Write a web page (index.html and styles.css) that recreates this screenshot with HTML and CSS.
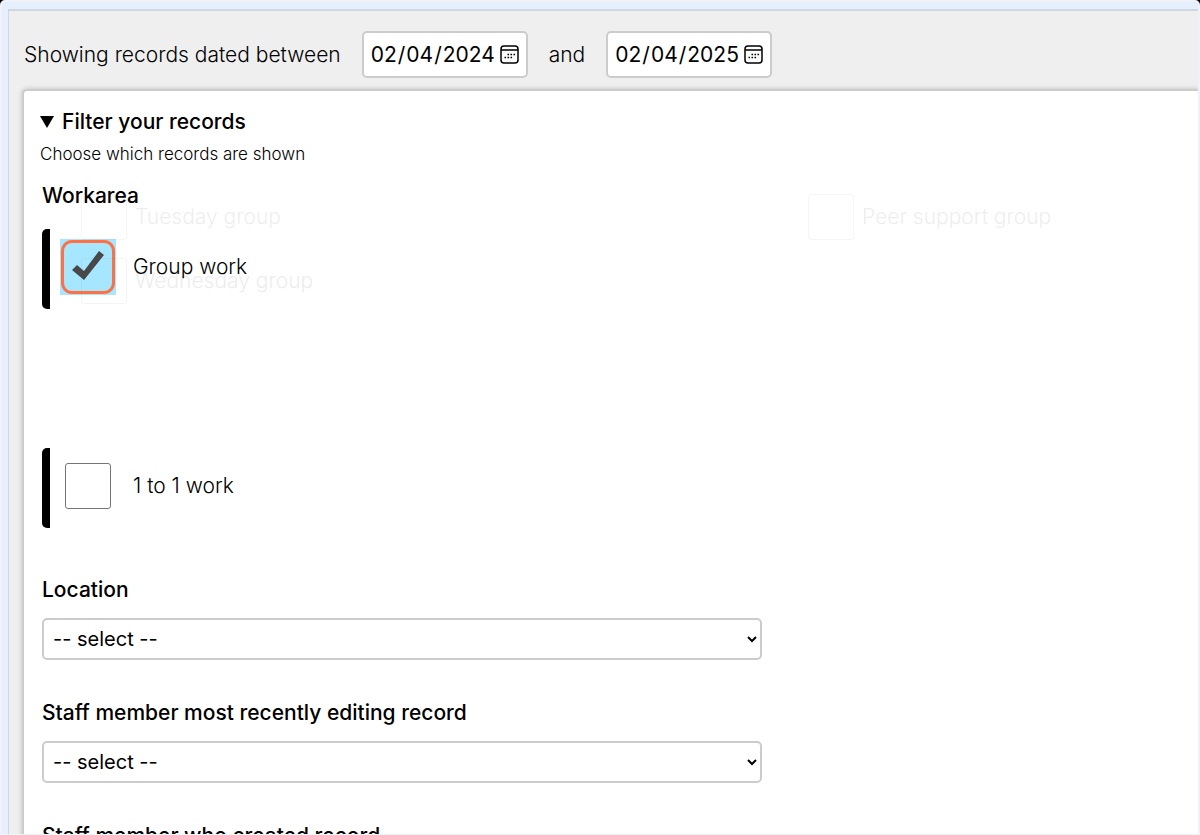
FILE: index.html
```html
<!DOCTYPE html>
<html lang="en">
<head>
<meta charset="utf-8">
<title>Filter your records</title>
<link rel="stylesheet" href="styles.css">
</head>
<body>
<div class="frame">
  <main class="panel">
    <form class="dates">
      <label for="from">Showing records dated between</label>
      <input class="date" id="from" type="date" value="2024-02-04">
      <label for="to">and</label>
      <input class="date" id="to" type="date" value="2025-02-04">
    </form>
    <section class="card">
      <details open>
        <summary class="summary">
          <svg class="marker" viewBox="0 0 14 12" aria-hidden="true"><path d="M0 0h14L7 12z"/></svg>
          Filter your records
        </summary>
        <p class="hint">Choose which records are shown</p>
        <div class="filters">
          <fieldset class="workarea">
            <legend class="heading">Workarea</legend>
            <div class="option">
              <span class="tick-cell focused"><input class="tick" id="group" type="checkbox" checked></span>
              <label for="group">Group work</label>
            </div>
            <div class="option">
              <span class="tick-cell"><input class="tick" id="single" type="checkbox"></span>
              <label for="single">1 to 1 work</label>
            </div>
            <div class="fading">
              <div class="sub"><input class="tick" id="tue" type="checkbox"><label for="tue">Tuesday group</label></div>
              <div class="sub"><input class="tick" id="peer" type="checkbox"><label for="peer">Peer support group</label></div>
              <div class="sub"><input class="tick" id="wed" type="checkbox"><label for="wed">Wednesday group</label></div>
            </div>
          </fieldset>
          <div class="field">
            <label class="heading" for="location">Location</label>
            <select class="select" id="location"><option>-- select --</option></select>
          </div>
          <div class="field">
            <label class="heading" for="editor">Staff member most recently editing record</label>
            <select class="select" id="editor"><option>-- select --</option></select>
          </div>
          <div class="field">
            <label class="heading" for="creator">Staff member who created record</label>
            <select class="select" id="creator"><option>-- select --</option></select>
          </div>
        </div>
      </details>
    </section>
  </main>
</div>
</body>
</html>
```
FILE: styles.css
```css
* { box-sizing: border-box; }

body {
  margin: 0;
  background: #000;
  color: #000;
  font: 300 21px/28px Inter, "Liberation Sans", sans-serif;
}

.frame {
  height: 100vh;
  overflow: hidden;
  border: solid #f2f0f8;
  border-width: 2px 2px 1px;
  border-radius: 5px 5px 0 0;
  background: #e6effd;
  padding: 7px 0 0 6px;
}

.panel {
  border: solid #d0d7e0;
  border-width: 2px 0 0 1px;
  background: #efefef;
  padding: 20px 0 0 13px;
}

.dates {
  display: flex;
  align-items: center;
  gap: 21px;
  padding-left: 2px;
  margin-bottom: 11px;
}

.date {
  width: 166px;
  height: 47px;
  padding: 0 7px 0 6px;
  border: 2px solid #ccc;
  border-radius: 5px;
  background: #fff;
  color: #000;
  font: 400 21px/28px Inter, "Liberation Sans", sans-serif;
}

.date::-webkit-datetime-edit,
.date::-webkit-datetime-edit-fields-wrapper { padding: 0; }

.date::-webkit-calendar-picker-indicator {
  width: 19px;
  height: 19px;
  margin: 0;
  padding: 0;
  background: url("data:image/svg+xml,%3Csvg xmlns='http://www.w3.org/2000/svg' viewBox='0 0 19 19'%3E%3Crect x='1' y='1' width='17' height='17' rx='3' fill='none' stroke='%23000' stroke-width='1.5'/%3E%3Cpath d='M1 5h17' stroke='%23000' stroke-width='1.4'/%3E%3Cpath d='M8 9h1.6M11 9h1.6M14 9h1.6M5 12h1.6M8 12h1.6M11 12h1.6M5 9' transform='translate(-.5 .5)' stroke='%23000' stroke-width='1.5'/%3E%3C/svg%3E") center / 19px no-repeat;
}

.card {
  min-height: 100vh;
  border: solid #ccc;
  border-width: 2px 0 0 2px;
  border-radius: 5px 0 0 0;
  background: #fff;
  padding: 17px 16px 0;
  box-shadow: 0 0 5px #0003;
}

.summary {
  display: flex;
  align-items: center;
  gap: 8px;
  font-weight: 550;
  list-style: none;
}

.marker { width: 14px; height: 12px; }

.hint {
  margin: 7px 0 17px;
  font-size: 17px;
  line-height: 22px;
}

.filters { padding-left: 2px; }

.heading {
  display: block;
  padding: 0;
  font-weight: 550;
}

.workarea {
  position: relative;
  margin: 0 0 48px;
  padding: 0;
  border: 0;
}

.option {
  position: relative;
  display: flex;
  align-items: center;
  gap: 17px;
  height: 80px;
  margin-top: 19px;
  padding: 0 0 4px 18px;
}

.option::before {
  content: "";
  position: absolute;
  inset: 0 auto 0 0;
  width: 8px;
  border-radius: 5px 0 0 5px;
  background: #000;
}

.option + .option { margin-top: 139px; }

.tick-cell {
  display: grid;
  place-items: center;
  width: 56px;
  height: 56px;
}

.tick {
  appearance: none;
  width: 46px;
  height: 46px;
  margin: 0;
  border: 1px solid #767676;
  border-radius: 3px;
  background: #fff;
}

.focused { background: #a6e6ff; }

.focused .tick {
  width: 54px;
  height: 54px;
  border: 3px solid #ff7043;
  border-radius: 11px;
  background: url("data:image/svg+xml,%3Csvg xmlns='http://www.w3.org/2000/svg' viewBox='0 0 48 48'%3E%3Cpath d='M8 27l5-5 7 6L35 8l5 4-20 25z' fill='%23484848'/%3E%3C/svg%3E") center / 48px no-repeat;
}

.fading {
  position: absolute;
  top: -16px;
  left: 39px;
  right: -16px;
  display: grid;
  grid-template-columns: 727px 1fr;
  row-gap: 18px;
  opacity: .07;
  pointer-events: none;
}

.sub {
  display: flex;
  align-items: center;
  gap: 8px;
}

.sub .tick { background: none; }

.field { margin-bottom: 39px; }

.select {
  display: block;
  width: 720px;
  max-width: 100%;
  height: 42px;
  margin-top: 14px;
  padding: 0 0 0 5px;
  border: 2px solid #ccc;
  border-radius: 5px;
  background: #fff;
  color: #000;
  font: 400 20px/28px Inter, "Liberation Sans", sans-serif;
}
```
